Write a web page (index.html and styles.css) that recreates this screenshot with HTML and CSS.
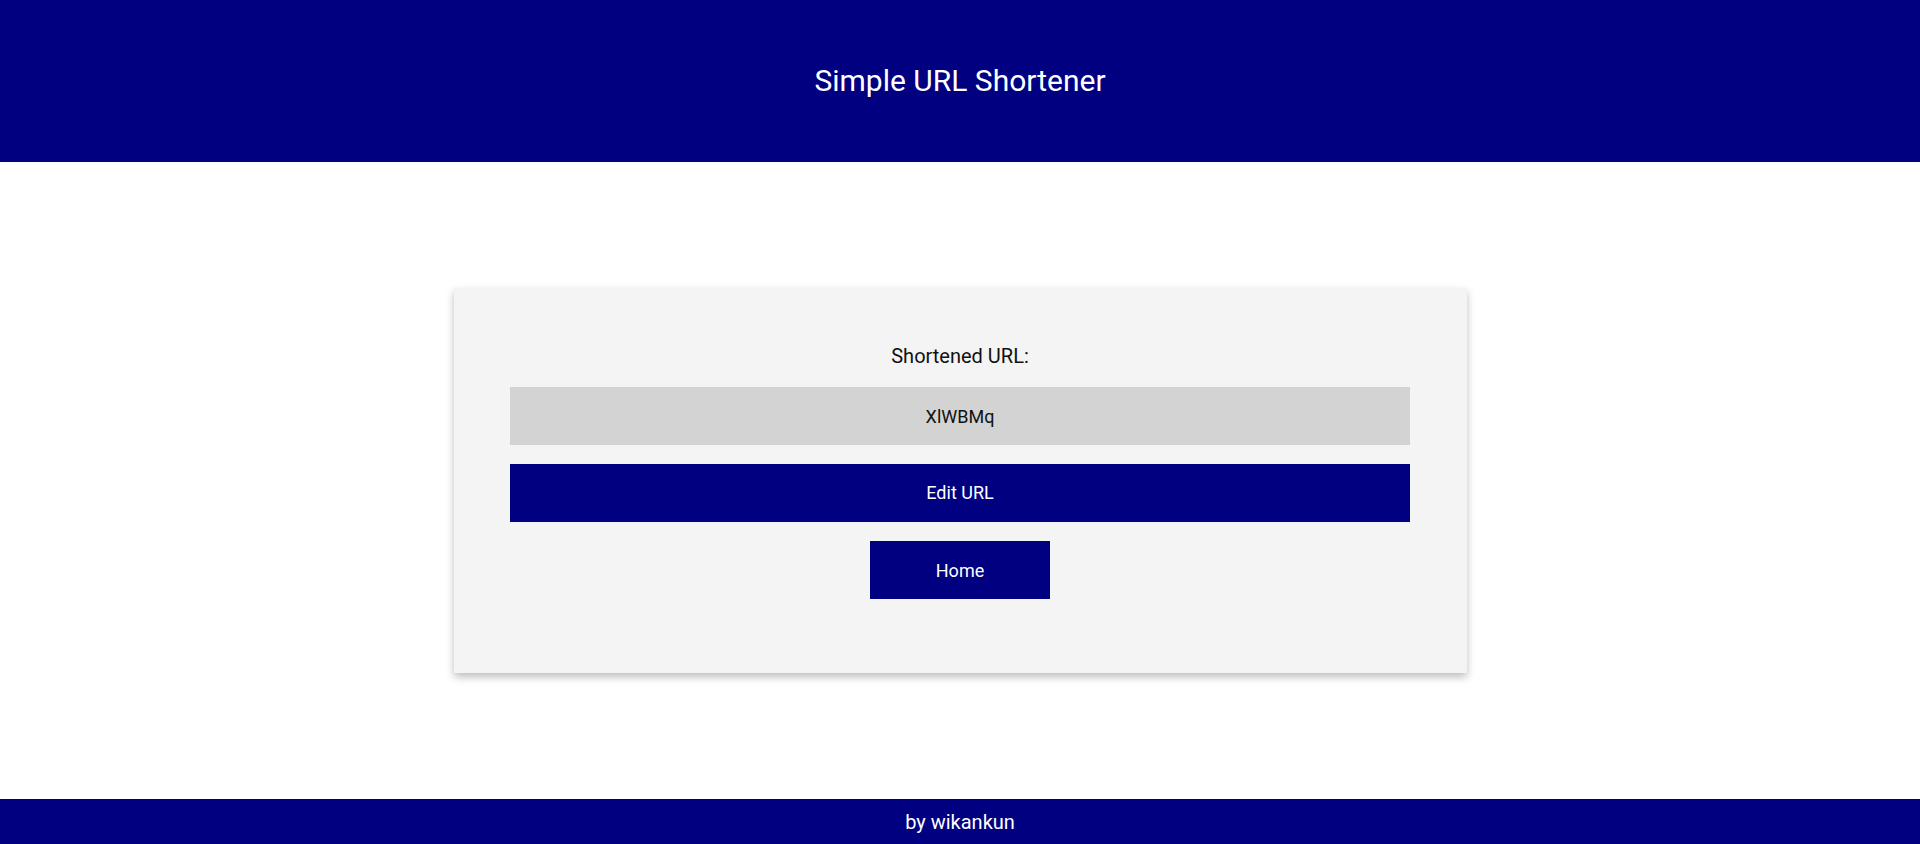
FILE: index.html
```html
<!DOCTYPE html>
<html lang="en">
<head>
<meta charset="utf-8">
<title>Simple URL Shortener</title>
<link rel="stylesheet" href="styles.css">
</head>
<body>
<header class="site-header">
  <h1 class="site-title">Simple URL Shortener</h1>
</header>
<main class="main">
  <section class="card">
    <p class="card-label">Shortened URL:</p>
    <input class="short-url" type="text" value="XlWBMq" readonly>
    <button class="btn btn-wide" type="button">Edit URL</button>
    <button class="btn btn-home" type="button">Home</button>
  </section>
</main>
<footer class="site-footer">by wikankun</footer>
</body>
</html>
```

FILE: styles.css
```css
* { box-sizing: border-box; }
html, body { margin: 0; padding: 0; }
body {
  font-family: Roboto, "Liberation Sans", Arial, sans-serif;
  background: #ffffff;
  color: #000000;
  min-height: 100vh;
  display: flex;
  flex-direction: column;
}
.site-header {
  background: #000080;
  height: 162px;
  display: flex;
  align-items: center;
  justify-content: center;
}
.site-title {
  margin: 0;
  color: #ffffff;
  font-weight: 400;
  font-size: 30px;
  line-height: 36px;
}
.main {
  flex: 1;
  display: flex;
  align-items: center;
  justify-content: center;
}
.card {
  width: 1013px;
  background: #f4f4f4;
  box-shadow: 0 4px 8px 0 rgba(0, 0, 0, 0.26);
  padding: 56px 0 74px;
  display: flex;
  flex-direction: column;
  align-items: center;
}
.card-label {
  margin: 0 0 19px;
  font-size: 20px;
  line-height: 24px;
  color: #111111;
}
.short-url {
  width: 900px;
  height: 58.7px;
  border: none;
  background: #d3d3d3;
  font-family: inherit;
  font-size: 18px;
  color: #111111;
  text-align: center;
  padding: 0;
  outline: none;
}
.btn {
  height: 58.7px;
  border: none;
  background: #000080;
  color: #ffffff;
  font-family: inherit;
  font-size: 18px;
  padding: 0;
  cursor: pointer;
}
.btn-wide {
  width: 900px;
  margin-top: 18.3px;
}
.btn-home {
  width: 180px;
  height: 58px;
  margin-top: 19px;
}
.site-footer {
  background: #000080;
  color: #ffffff;
  height: 45px;
  display: flex;
  align-items: center;
  justify-content: center;
  font-size: 20px;
}
```
